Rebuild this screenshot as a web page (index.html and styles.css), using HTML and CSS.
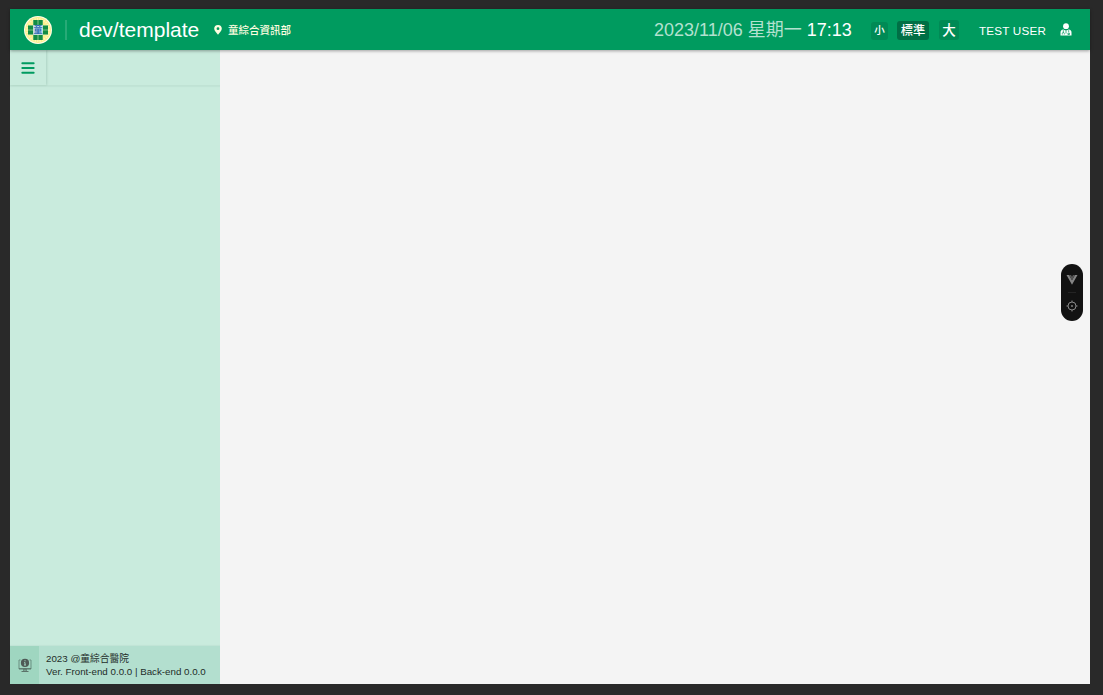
FILE: index.html
```html
<!DOCTYPE html>
<html lang="zh-Hant">
<head>
<meta charset="utf-8">
<title>dev/template</title>
<link rel="stylesheet" href="styles.css">
</head>
<body>
<div class="app">
  <header class="header">
    <svg class="logo" viewBox="0 0 28 28">
      <circle cx="14" cy="14" r="14" fill="#fffde8"/>
      <circle cx="14" cy="14" r="12.9" fill="#fbf08c"/>
      <circle cx="14" cy="14" r="11" fill="none" stroke="#fff" stroke-width="2" stroke-dasharray="1.2 1.2" opacity=".45"/>
      <path d="M9 4h10v5h5v10h-5v5H9v-5H4V9h5z" fill="#d9edb8"/>
      <path d="M9.300 4h4.400v5.300H9.300zM14.300 4h4.400v5.300h-4.400zM9.300 18.700h4.400V24H9.300zM14.300 18.700h4.400V24h-4.400zM4 9.500h5.200v4.200H4zM4 14.300h5.200v4.200H4zM18.800 9.500H24v4.200h-5.200zM18.800 14.300H24v4.200h-5.200z" fill="#128c43"/>
      <rect x="9.300" y="9.200" width="9.400" height="9.600" fill="#c8e0ee"/>
      <text class="logo-text" x="14" y="17.300" text-anchor="middle">童</text>
    </svg>
    <span class="divider"></span>
    <h1 class="title">dev/template</h1>
    <svg class="pin" viewBox="0 0 8 10"><path fill="#fffde0" fill-rule="evenodd" d="M4 0a3.800 3.800 0 0 0-3.800 3.800C.2 6 2.500 7.800 4 9.800 5.500 7.800 7.800 6 7.800 3.800A3.800 3.800 0 0 0 4 0zm0 2.300a1.400 1.400 0 1 1 0 2.800 1.400 1.400 0 0 1 0-2.800z"/></svg>
    <span class="dept">童綜合資訊部</span>
    <div class="clock"><span class="date">2023/11/06 星期一</span> <span class="time">17:13</span></div>
    <div class="sizes">
      <button class="size small">小</button>
      <button class="size normal">標準</button>
      <button class="size large">大</button>
    </div>
    <span class="user">TEST USER</span>
    <svg class="user-icon" viewBox="0 0 12 13">
      <circle cx="6" cy="3.200" r="2.900" fill="#fff"/>
      <path d="M.5 12.500V9.500Q.5 6.900 3.200 6.500L6 7.700l2.800-1.200q2.700.4 2.700 3v3z" fill="#fff"/>
      <path d="M3.300 7.200v2.400M8.700 7.200v2M2.300 11.500v-1q0-1 1-1t1 1v1M6 8v2.500M7.900 10.200h1.600v1.300H7.900z" fill="none" stroke="#009b5f" stroke-width=".75"/>
    </svg>
  </header>
  <div class="body">
    <aside class="sidebar">
      <div class="toolbar">
        <button class="menu" aria-label="menu">
          <svg width="14" height="12" viewBox="0 0 14 12"><path d="M1.300 1.200h11.400M1.300 6h11.400M1.300 10.800h11.400" stroke="#009b60" stroke-width="1.900" stroke-linecap="round"/></svg>
        </button>
      </div>
      <footer class="footer">
        <div class="info">
          <svg width="14" height="15" viewBox="0 0 14 15">
            <path d="M2.500 2H1v9h12V2h-1.500" fill="none" stroke="#6b8f81" stroke-width="1"/>
            <path d="M1 10.700h12M5.800 11h2.400v2.200H5.800zM3.500 13.500h7" fill="none" stroke="#5b7369" stroke-width="1"/>
            <circle cx="7" cy="4.900" r="4.100" fill="#4f5a56"/>
            <path d="M7 2.200v1.100M6.300 4.500H7v2.400M6 7h2" fill="none" stroke="#a5d6c3" stroke-width="1"/>
          </svg>
        </div>
        <div class="version"><div>2023 @童綜合醫院</div><div>Ver. Front-end 0.0.0 | Back-end 0.0.0</div></div>
      </footer>
    </aside>
    <main class="content"></main>
  </div>
</div>
<div class="devtools">
  <svg width="12" height="10" viewBox="0 0 12 10"><path d="M.5 0H3l3 5.300L9 0h2.500L6 9.700z" fill="#858585"/><path d="M3 0h2l1 1.800L7 0h2L6 5.300z" fill="#555"/></svg>
  <span class="devtools-line"></span>
  <svg width="12" height="12" viewBox="0 0 12 12"><g fill="none" stroke="#898989"><circle cx="6" cy="6" r="4"/><path d="M6 .5V2M6 10v1.500M.5 6H2M10 6h1.500"/></g><circle cx="6" cy="6" r=".9" fill="#898989"/></svg>
</div>
</body>
</html>
```
FILE: styles.css
```css
* { box-sizing: border-box; }
body {
  margin: 0;
  height: 695px;
  padding: 9px 13px 11px 10px;
  background: #292929;
  font-family: "Liberation Sans", "Noto Sans CJK TC", sans-serif;
  overflow: hidden;
}
button { border: 0; padding: 0; margin: 0; font-family: inherit; }
svg { display: block; flex: none; }
.app { height: 675px; display: flex; flex-direction: column; }
.header {
  height: 41px;
  flex: none;
  display: flex;
  align-items: center;
  padding: 0 18px 0 14px;
  background: #009b5f;
  color: #fff;
  box-shadow: 0 1px 3px rgba(0, 0, 0, .35);
  z-index: 1;
  white-space: nowrap;
}
.logo { width: 28px; height: 28px; }
.logo-text { font-size: 9px; font-weight: 700; fill: #2d68b5; }
.divider { width: 2px; height: 20px; margin: 0 12px 0 13px; background: #27aa77; }
.title { margin: 0; font-size: 21px; line-height: 26px; font-weight: 400; width: 120px; }
.pin { width: 8px; height: 10px; margin-left: 15px; }
.dept { margin-left: 6px; font-size: 10.500px; font-weight: 500; line-height: 16px; color: #fffde0; }
.clock { margin-left: auto; font-size: 18px; line-height: 26px; width: 197px; }
.date { color: #b3e1cf; font-weight: 400; }
.sizes { display: flex; align-items: center; margin: 2px 0 0 20px; }
.size {
  color: #fff;
  background: #008a55;
  border-radius: 3px;
  text-align: center;
  font-weight: 500;
}
.small { width: 17px; height: 18px; font-size: 10.500px; line-height: 17px; margin-right: 9px; }
.normal { width: 32px; height: 19px; font-size: 12.300px; line-height: 20px; margin-right: 10px; background: #006f45; }
.large { width: 20px; height: 20px; font-size: 13.500px; line-height: 21px; margin-top: -1px; }
.user { margin: 2px 13px 0 20px; font-size: 11.700px; letter-spacing: .18px; width: 68px; }
.user-icon { width: 12px; height: 13px; }
.body { flex: 1; display: flex; min-height: 0; }
.sidebar { width: 210px; background: #c9ebdd; display: flex; flex-direction: column; justify-content: space-between; }
.toolbar { height: 36px; border-bottom: 1px solid #c0e2d4; box-shadow: 0 1px 1px rgba(0, 80, 50, .04); }
.menu {
  width: 36px;
  height: 35px;
  padding-left: 11px;
  padding-top: 1px;
  display: flex;
  align-items: center;
  background: #c9ebdd;
  box-shadow: 1px 0 2px rgba(0, 70, 45, .14);
}
.footer { height: 38px; display: flex; background: #b3dfcf; box-shadow: 0 -1px 1px rgba(0, 80, 50, .04); }
.info { width: 29px; display: flex; align-items: center; justify-content: center; background: #9fd6c0; }
.version { padding: 6px 0 0 7px; font-size: 9.750px; line-height: 13px; color: #232d29; white-space: nowrap; }
.content { flex: 1; background: #f4f4f4; }
.devtools {
  position: absolute;
  left: 1061px;
  top: 264px;
  width: 22px;
  height: 57px;
  border-radius: 11px;
  background: #121212;
  display: flex;
  flex-direction: column;
  align-items: center;
  justify-content: space-between;
  padding: 11px 0 9px;
}
.devtools-line { width: 8px; height: 1px; background: #242424; }
```
